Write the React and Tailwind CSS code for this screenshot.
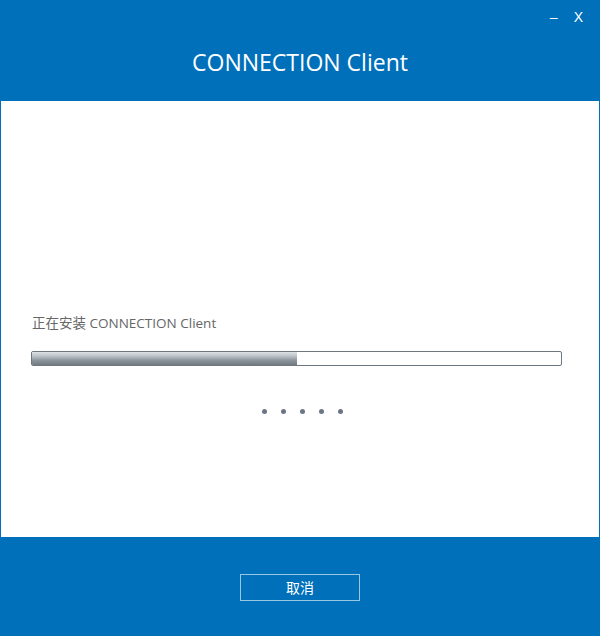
import React from 'react';

export default function App() {
  const progress = 50;

  return (
    <div className="w-[600px] h-[636px] flex flex-col bg-[#0070ba] font-['Segoe_UI','Open_Sans','Noto_Sans_CJK_SC',sans-serif] select-none">
      {/* header */}
      <div className="h-[101px] shrink-0 flex flex-col">
        <div className="flex justify-end items-center gap-[16px] pr-[17px] pt-[8px] h-[26px] text-white text-[14px] leading-none">
          <span className="font-['Liberation_Sans',sans-serif]">–</span>
          <span className="font-['Liberation_Sans',sans-serif]">X</span>
        </div>
        <div className="flex-1 flex items-start justify-center pt-[25px]">
          <h1 className="text-white text-[23px] leading-none">CONNECTION Client</h1>
        </div>
      </div>

      {/* body */}
      <div className="h-[436px] mx-px bg-white flex flex-col pl-[30px] pr-[37px]">
        <p className="mt-[216px] text-[13.5px] text-[#666] leading-none pl-px">正在安装 CONNECTION Client</p>
        <div className="mt-[20px] h-[15px] border border-[#6d777f] rounded-[2px] bg-white overflow-hidden">
          <div
            className="h-full bg-[linear-gradient(to_bottom,#dfe3e6_0%,#b8bec3_35%,#8b949b_65%,#707a80_100%)]"
            style={{ width: `${progress}%` }}
          />
        </div>
        <div className="mt-[43px] flex justify-center gap-[14px] pl-[12px]">
          {[0, 1, 2, 3, 4].map((i) => (
            <span key={i} className="w-[5px] h-[5px] rounded-full bg-[#6b7684]" />
          ))}
        </div>
      </div>

      {/* footer */}
      <div className="flex-1 flex items-start justify-center pt-[37px]">
        <button className="w-[120px] h-[27px] border border-white/60 text-white text-[14px] leading-none">取消</button>
      </div>
    </div>
  );
}
